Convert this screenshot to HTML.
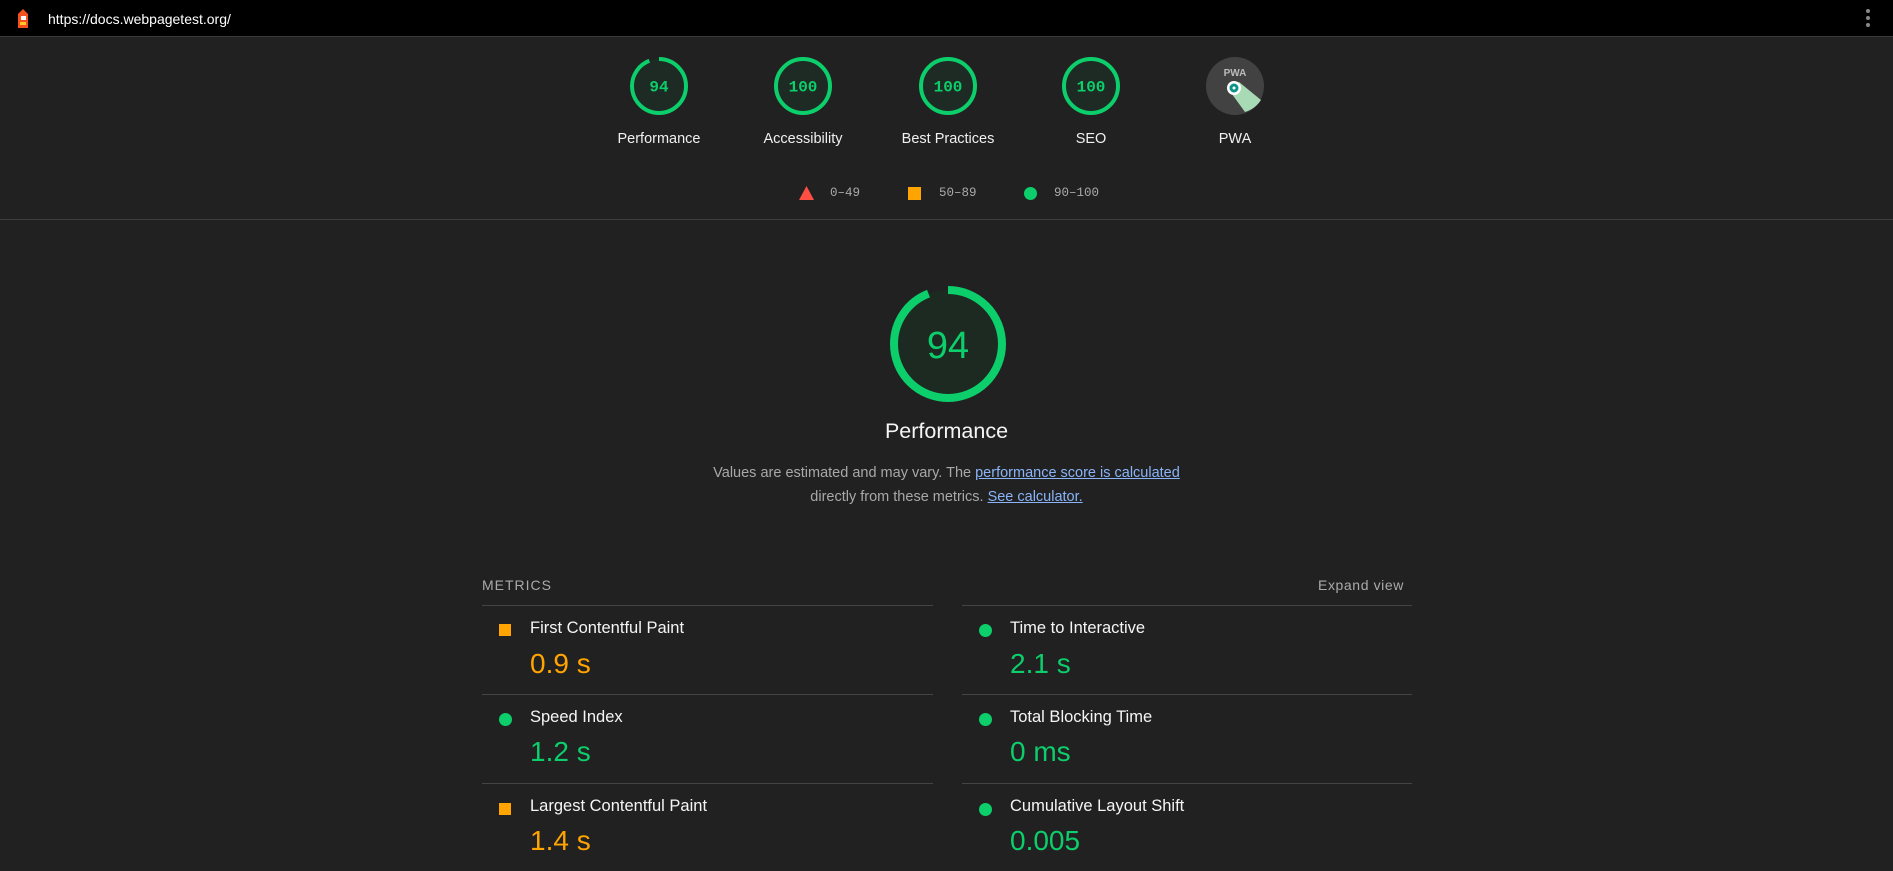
<!DOCTYPE html>
<html><head><style>
*{margin:0;padding:0;box-sizing:border-box}
body{width:1893px;height:871px;background:#212121;font-family:"Liberation Sans",sans-serif;color:#f5f5f5;position:relative;overflow:hidden}
.abs{position:absolute}
.top{left:0;top:0;width:1893px;height:37px;background:#000;border-bottom:1px solid #3a3a3a}
.g{position:absolute;width:60px;height:60px;margin-left:-30px;margin-top:-30px}
.lbl{position:absolute;font-size:14.5px;transform:translateX(-50%);white-space:nowrap;color:#f0f0f0}
.mono{font-family:"Liberation Mono",monospace}
.leg{position:absolute;font-size:12.5px;color:#aaa;top:186px}
.line{position:absolute;height:1px;background:#444}
.ml{position:absolute;font-size:16.5px;color:#f5f5f5;top:2px}
.mv{position:absolute;font-size:28px}
.or{color:#ffa400}.gr{color:#0cce6b}
.sq{position:absolute;width:12px;height:12px;background:#ffa400}
.ci{position:absolute;width:13px;height:13px;border-radius:50%;background:#0cce6b}
a{color:#8ab4f8;text-decoration:underline}
</style></head><body>
<div class="abs top"></div>
<svg class="abs" style="left:15px;top:8px" width="16" height="22" viewBox="0 0 16 22"><path d="M8 1 L13 6 L13 20 L3 20 L3 6 Z" fill="#f4511e"/><rect x="6" y="8" width="5" height="4" fill="#fff"/><rect x="5" y="14" width="6" height="3" fill="#ffca28"/></svg>
<div class="abs" style="left:48px;top:11px;font-size:14px;color:#fff">https://docs.webpagetest.org/</div>
<div class="abs" style="left:1866px;top:9px;width:4px;height:4px;border-radius:2px;background:#888;box-shadow:0 7px 0 #888,0 14px 0 #888"></div>

<svg class="g" style="left:659px;top:86px" viewBox="0 0 60 60"><circle cx="30" cy="30" r="27" fill="#1e2b24"/><circle cx="30" cy="30" r="27" fill="none" stroke="#0cce6b" stroke-width="4" stroke-dasharray="159.5 170" transform="rotate(-90 30 30)"/><text x="30" y="35.5" text-anchor="middle" font-family="Liberation Mono,monospace" font-size="16" font-weight="bold" fill="#0cce6b">94</text></svg>
<svg class="g" style="left:803px;top:86px" viewBox="0 0 60 60"><circle cx="30" cy="30" r="27" fill="#1e2b24" stroke="#0cce6b" stroke-width="4"/><text x="30" y="35.5" text-anchor="middle" font-family="Liberation Mono,monospace" font-size="16" font-weight="bold" fill="#0cce6b">100</text></svg>
<svg class="g" style="left:948px;top:86px" viewBox="0 0 60 60"><circle cx="30" cy="30" r="27" fill="#1e2b24" stroke="#0cce6b" stroke-width="4"/><text x="30" y="35.5" text-anchor="middle" font-family="Liberation Mono,monospace" font-size="16" font-weight="bold" fill="#0cce6b">100</text></svg>
<svg class="g" style="left:1091px;top:86px" viewBox="0 0 60 60"><circle cx="30" cy="30" r="27" fill="#1e2b24" stroke="#0cce6b" stroke-width="4"/><text x="30" y="35.5" text-anchor="middle" font-family="Liberation Mono,monospace" font-size="16" font-weight="bold" fill="#0cce6b">100</text></svg>
<svg class="g" style="left:1235px;top:86px" viewBox="0 0 60 60"><circle cx="30" cy="30" r="29" fill="#424242"/><path d="M24 34 L40 56 A29 29 0 0 0 56 44 L34 26 Z" fill="#a8dab5"/><text x="30" y="20" text-anchor="middle" font-size="10" font-weight="bold" fill="#bbb">PWA</text><circle cx="29" cy="32" r="7" fill="#fff"/><circle cx="29" cy="32" r="4.5" fill="#0d9488"/><circle cx="29" cy="32" r="1.5" fill="#fff"/></svg>

<div class="lbl" style="left:659px;top:131px">Performance</div>
<div class="lbl" style="left:803px;top:131px">Accessibility</div>
<div class="lbl" style="left:948px;top:131px">Best Practices</div>
<div class="lbl" style="left:1091px;top:131px">SEO</div>
<div class="lbl" style="left:1235px;top:131px">PWA</div>

<svg class="abs" style="left:799px;top:186px" width="15" height="14"><path d="M7.5 0 L15 14 L0 14 Z" fill="#ff4e42"/></svg>
<div class="leg mono" style="left:830px">0–49</div>
<div class="abs" style="left:908px;top:187px;width:13px;height:13px;background:#ffa400"></div>
<div class="leg mono" style="left:939px">50–89</div>
<div class="abs" style="left:1024px;top:187px;width:13px;height:13px;border-radius:50%;background:#0cce6b"></div>
<div class="leg mono" style="left:1054px">90–100</div>
<div class="line" style="left:0;top:219px;width:1893px;background:#3d3d3d"></div>

<svg class="abs" style="left:886px;top:282px" width="124" height="124" viewBox="0 0 124 124"><circle cx="62" cy="62" r="54" fill="#1d2a22"/><circle cx="62" cy="62" r="54" fill="none" stroke="#0cce6b" stroke-width="8" stroke-dasharray="319 340" transform="rotate(-90 62 62)"/><text x="62" y="76" text-anchor="middle" font-family="Liberation Sans,sans-serif" font-size="38" fill="#0cce6b">94</text></svg>
<div class="abs" style="left:0;width:1893px;text-align:center;top:419px;font-size:21.5px;color:#f5f5f5">Performance</div>
<div class="abs" style="left:0;width:1893px;text-align:center;top:461px;font-size:14.5px;color:#a8a8a8;line-height:24px">Values are estimated and may vary. The <a>performance score is calculated</a><br>directly from these metrics. <a>See calculator.</a></div>

<div class="abs" style="left:482px;top:577px;font-size:14px;color:#aaa;letter-spacing:1px">METRICS</div>
<div class="abs" style="left:1318px;top:577px;font-size:14px;color:#aaa;letter-spacing:.6px">Expand view</div>

<div class="line" style="left:482px;top:605px;width:451px"></div>
<div class="line" style="left:962px;top:605px;width:450px"></div>
<div class="line" style="left:482px;top:694px;width:451px"></div>
<div class="line" style="left:962px;top:694px;width:450px"></div>
<div class="line" style="left:482px;top:783px;width:451px"></div>
<div class="line" style="left:962px;top:783px;width:450px"></div>

<div class="sq" style="left:499px;top:624px"></div><div class="ml" style="left:530px;top:619px">First Contentful Paint</div><div class="mv or" style="left:530px;top:648px">0.9 s</div>
<div class="ci" style="left:979px;top:624px"></div><div class="ml" style="left:1010px;top:619px">Time to Interactive</div><div class="mv gr" style="left:1010px;top:648px">2.1 s</div>
<div class="ci" style="left:499px;top:713px"></div><div class="ml" style="left:530px;top:708px">Speed Index</div><div class="mv gr" style="left:530px;top:736px">1.2 s</div>
<div class="ci" style="left:979px;top:713px"></div><div class="ml" style="left:1010px;top:708px">Total Blocking Time</div><div class="mv gr" style="left:1010px;top:736px">0 ms</div>
<div class="sq" style="left:499px;top:803px"></div><div class="ml" style="left:530px;top:797px">Largest Contentful Paint</div><div class="mv or" style="left:530px;top:825px">1.4 s</div>
<div class="ci" style="left:979px;top:803px"></div><div class="ml" style="left:1010px;top:797px">Cumulative Layout Shift</div><div class="mv gr" style="left:1010px;top:825px">0.005</div>
</body></html>
